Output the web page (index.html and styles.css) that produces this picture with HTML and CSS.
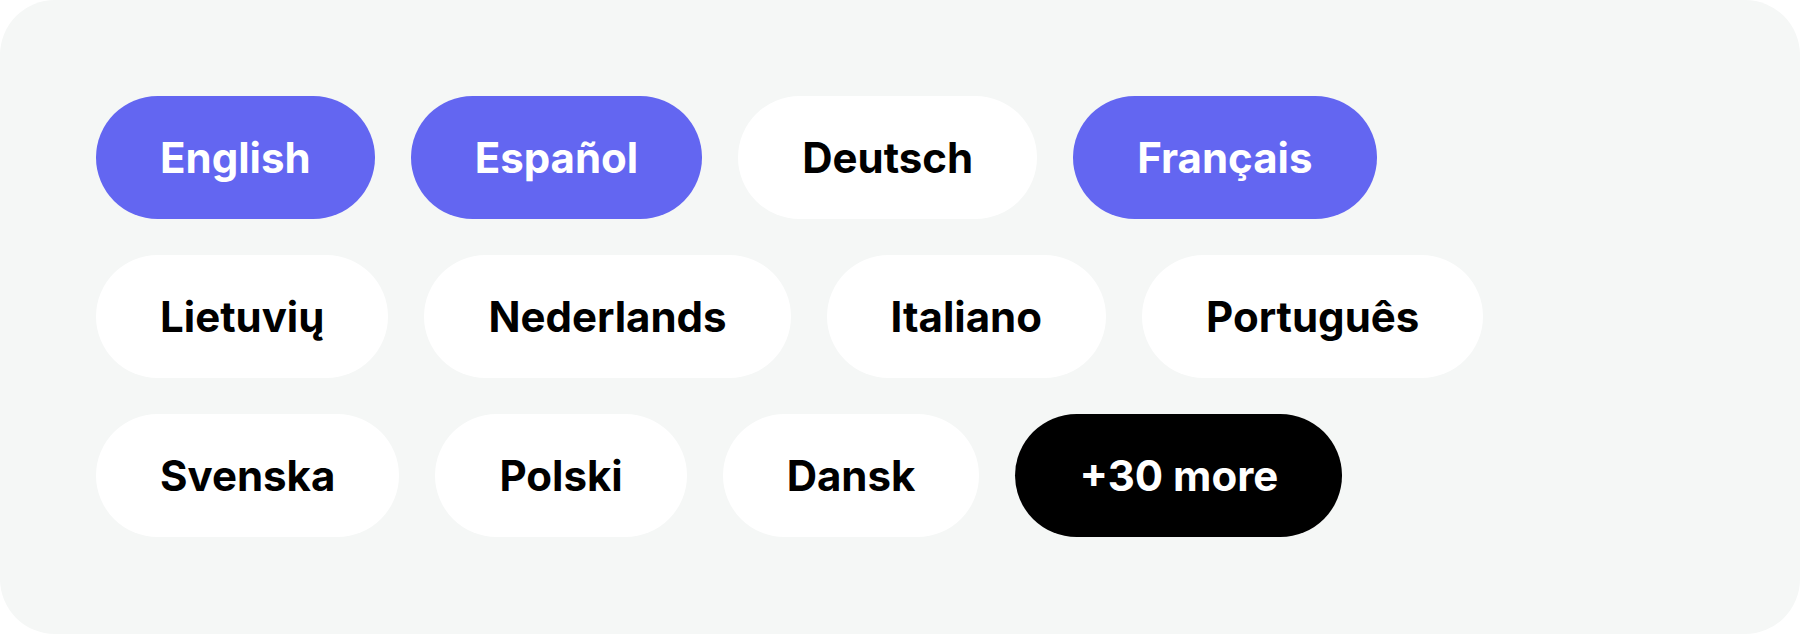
FILE: index.html
```html
<!DOCTYPE html>
<html lang="en">
<head>
  <meta charset="UTF-8">
  <meta name="viewport" content="width=device-width, initial-scale=1.0">
  <title>Languages</title>
  <link rel="stylesheet" href="styles.css">
</head>
<body>
  <div class="card">
    <div class="row">
      <span class="pill active">English</span>
      <span class="pill active">Español</span>
      <span class="pill">Deutsch</span>
      <span class="pill active">Français</span>
    </div>
    <div class="row">
      <span class="pill">Lietuvių</span>
      <span class="pill">Nederlands</span>
      <span class="pill">Italiano</span>
      <span class="pill">Português</span>
    </div>
    <div class="row">
      <span class="pill">Svenska</span>
      <span class="pill">Polski</span>
      <span class="pill">Dansk</span>
      <span class="pill more">+30 more</span>
    </div>
  </div>
</body>
</html>
```

FILE: styles.css
```css
* {
  box-sizing: border-box;
  margin: 0;
  padding: 0;
}

body {
  background: #ffffff;
  font-family: "Inter", "Noto Sans", sans-serif;
}

.card {
  width: 1800px;
  height: 634px;
  background: #f5f7f6;
  border-radius: 55px;
  padding: 96px;
  display: flex;
  flex-direction: column;
  gap: 36px;
}

.row {
  display: flex;
  gap: 36px;
}

.pill {
  display: flex;
  align-items: center;
  height: 123px;
  padding: 0 64px;
  border-radius: 62px;
  background: #ffffff;
  color: #000000;
  font-size: 42px;
  font-weight: 700;
  white-space: nowrap;
}

.pill.active {
  background: #6366f1;
  color: #ffffff;
}

.pill.more {
  background: #000000;
  color: #ffffff;
}
```
